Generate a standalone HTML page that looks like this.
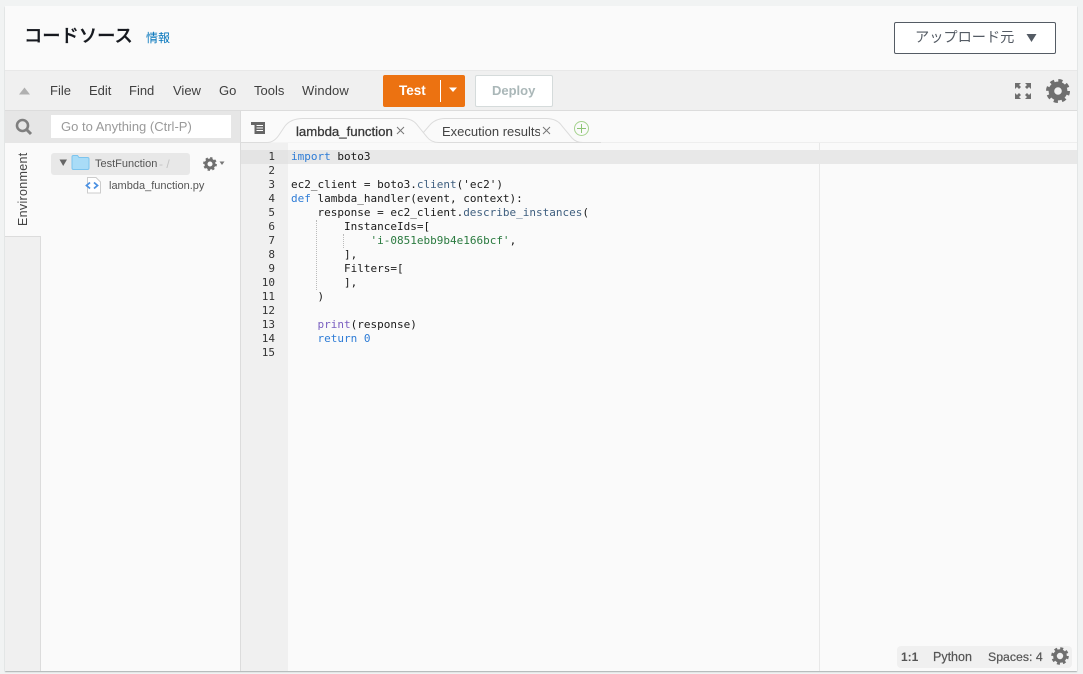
<!DOCTYPE html>
<html><head><meta charset="utf-8"><style>
*{box-sizing:border-box}
html,body{margin:0;padding:0;width:1083px;height:674px;overflow:hidden;background:#f1f3f3}
body{position:relative;font-family:"Liberation Sans","Noto Sans CJK JP",sans-serif}
.a{position:absolute;white-space:nowrap}
.m{font-size:13px;color:#3f3f3f;top:83px;line-height:15px}
.c{position:absolute;left:291px;font:11px/14px "DejaVu Sans Mono","Liberation Mono",monospace;color:#1a1a1a;white-space:pre}
.n{position:absolute;left:241px;width:34px;text-align:right;font:11px/14px "DejaVu Sans Mono","Liberation Mono",monospace;color:#333}
.k{color:#2e7cd6}.f{color:#3f5f7f}.s{color:#2a7a3f}.p{color:#7a5fc0}
</style></head><body>
<div class="a" style="left:5px;top:6px;width:1072px;height:665px;background:#fafafa;box-shadow:0 1px 1px #aab0b0"></div>
<div class="a" style="left:24px;top:23px;font-size:18.300px;line-height:26px;font-weight:500;color:#16191f;-webkit-text-stroke:.3px #16191f">コードソース</div>
<div class="a" style="left:146px;top:30px;font-size:12px;line-height:17px;color:#0073bb">情報</div>
<div class="a" style="left:894px;top:22px;width:162px;height:32px;border:1px solid #545b64;border-radius:2px;background:#fff"></div>
<div class="a" style="left:915px;top:29px;font-size:14.200px;line-height:18px;color:#545b64">アップロード元</div>
<svg class="a" style="left:1026px;top:33px" width="11" height="10"><path d="M.5 1H10.500L5.500 9Z" fill="#545b64"/></svg>

<div class="a" style="left:5px;top:70px;width:1072px;height:41px;background:#f0f0f0;border-top:1px solid #e8e8e8;border-bottom:1px solid #dcdcdc"></div>
<svg class="a" style="left:19px;top:87px" width="12" height="8"><path d="M0 7.500H11L5.500 .5Z" fill="#b0b0b0"/></svg>
<div class="a m" style="left:50px">File</div>
<div class="a m" style="left:89px">Edit</div>
<div class="a m" style="left:129px">Find</div>
<div class="a m" style="left:173px">View</div>
<div class="a m" style="left:219px">Go</div>
<div class="a m" style="left:254px">Tools</div>
<div class="a m" style="left:302px;letter-spacing:.1px">Window</div>
<div class="a" style="left:383px;top:75px;width:82px;height:32px;background:#ec7211;border-radius:2px"></div>
<div class="a" style="left:399px;top:83px;font-size:13.500px;line-height:15px;font-weight:bold;color:#fff">Test</div>
<div class="a" style="left:440px;top:80px;width:1px;height:22px;background:#fff"></div>
<svg class="a" style="left:448px;top:87px" width="10" height="6"><path d="M1 .5H9L5 5Z" fill="#fff"/></svg>
<div class="a" style="left:475px;top:75px;width:78px;height:32px;background:#fff;border:1px solid #d5dbdb;border-radius:2px"></div>
<div class="a" style="left:492px;top:83px;font-size:13px;line-height:15px;font-weight:bold;color:#aab7b8">Deploy</div>
<svg class="a" style="left:1014px;top:82px" width="18" height="18" fill="#6f6f6f"><path d="M1 1H7L5 3 7 5 5 7 3 5 1 7ZM17 1H11L13 3 11 5 13 7 15 5 17 7ZM1 17H7L5 15 7 13 5 11 3 13 1 11ZM17 17H11L13 15 11 13 13 11 15 13 17 11Z"/></svg>
<svg class="a" style="left:1046px;top:79px" width="24" height="24"><circle cx="12" cy="12" r="6.600" fill="none" stroke="#6f6f6f" stroke-width="5.600"/><circle cx="12" cy="12" r="10.300" fill="none" stroke="#6f6f6f" stroke-width="3.400" stroke-dasharray="4.090 4"/></svg>

<div class="a" style="left:5px;top:111px;width:36px;height:560px;background:#f0f0f0"></div>
<div class="a" style="left:5px;top:111px;width:235px;height:32px;background:#e6e6e6"></div>
<div class="a" style="left:5px;top:143px;width:36px;height:94px;background:#fafafa;border-bottom:1px solid #dcdcdc;border-right:0"></div>
<div class="a" style="left:40px;top:237px;width:1px;height:434px;background:#dcdcdc"></div>
<svg class="a" style="left:15px;top:118px" width="18" height="18"><circle cx="7.500" cy="7.500" r="5.500" fill="none" stroke="#7f7f7f" stroke-width="2.600"/><path d="M11.500 11.500L16 16" stroke="#7f7f7f" stroke-width="3"/></svg>
<div class="a" style="left:51px;top:115px;width:180px;height:23px;background:#fff"></div>
<div class="a" style="left:61px;top:119px;font-size:13px;line-height:15px;color:#9a9a9a">Go to Anything (Ctrl-P)</div>
<div class="a" style="left:16px;top:226px;font-size:12.500px;line-height:14px;color:#444;transform-origin:0 0;transform:rotate(-90deg);letter-spacing:.3px">Environment</div>

<div class="a" style="left:51px;top:153px;width:139px;height:22px;background:#e8e8e8;border-radius:3px"></div>
<svg class="a" style="left:59px;top:159px" width="9" height="8"><path d="M.5 .5H8L4.200 7Z" fill="#666"/></svg>
<svg class="a" style="left:71px;top:154px" width="19" height="17"><path d="M1 14V3Q1 1.500 2.500 1.500H6.500L8 3.500H16.500Q18 3.500 18 5V14Q18 15.500 16.500 15.500H2.500Q1 15.500 1 14Z" fill="#a9dcf7" stroke="#7cc4ee"/></svg>
<div class="a" style="left:95px;top:157px;font-size:11px;line-height:14px;color:#555">TestFunction</div>
<div class="a" style="left:159px;top:157px;font-size:12px;line-height:14px;color:#c4c4c4">- /</div>
<svg class="a" style="left:203px;top:157px" width="14" height="14"><circle cx="7" cy="7" r="4" fill="none" stroke="#6f6f6f" stroke-width="3"/><circle cx="7" cy="7" r="5.800" fill="none" stroke="#6f6f6f" stroke-width="2.200" stroke-dasharray="2.300 2.250"/></svg>
<svg class="a" style="left:219px;top:161px" width="6" height="5"><path d="M.5 .5H5.500L3 4Z" fill="#777"/></svg>
<svg class="a" style="left:85px;top:177px" width="17" height="17"><path d="M2.500 .5H11L15.500 5V16H2.500Z" fill="#fff" stroke="#ccc"/><path d="M5 5.500L1.500 8.500 5 11.500M9 5.500L12.500 8.500 9 11.500" fill="none" stroke="#4a90e2" stroke-width="1.800"/></svg>
<div class="a" style="left:109px;top:179px;font-size:11px;line-height:14px;color:#555">lambda_function.py</div>

<div class="a" style="left:240px;top:111px;width:1px;height:560px;background:#dcdcdc"></div>
<div class="a" style="left:241px;top:111px;width:836px;height:32px;background:#fafafa"></div>
<svg class="a" style="left:251px;top:122px" width="15" height="13" fill="#666"><path d="M0 0H14V12H3.500V3H0Z"/><path d="M5.500 3.500H12M5.500 6H12M5.500 8.500H12" stroke="#fff"/></svg>
<div class="a" style="left:241px;top:142px;width:836px;height:1px;background:#eee"></div>
<svg class="a" style="left:241px;top:111px" width="360" height="33">
<path d="M182 22L188 15Q194 7.500 204 7.500H305Q316 7.500 321 15L331 27Q335 31.500 342 31.500H360" fill="#fafafa" stroke="#dcdcdc"/>
<path d="M0 31.500H26Q33 31.500 38 24L44 15Q50 7.500 62 7.500H162Q172 7.500 177 15L186 26Q190 31.500 198 31.500" fill="#fafafa" stroke="#dcdcdc"/>
<rect x="198" y="31" width="145" height="1" fill="#dcdcdc"/>
</svg>
<div class="a" style="left:296px;top:124px;font-size:13.200px;line-height:15px;font-weight:500;color:#3a3a3a;-webkit-text-stroke:.3px #3a3a3a;width:99px;overflow:hidden">lambda_function</div>
<svg class="a" style="left:396px;top:126px" width="9" height="9"><path d="M1 1L8 8M8 1L1 8" stroke="#777"/></svg>
<div class="a" style="left:442px;top:124px;font-size:13px;line-height:15px;color:#444;width:98px;overflow:hidden">Execution results</div>
<svg class="a" style="left:542px;top:126px" width="9" height="9"><path d="M1 1L8 8M8 1L1 8" stroke="#777"/></svg>
<svg class="a" style="left:573px;top:120px" width="17" height="17"><circle cx="8.500" cy="8.500" r="7" fill="none" stroke="#a5d28e"/><path d="M8.500 4V13M4 8.500H13" stroke="#8cc474"/></svg>

<div class="a" style="left:241px;top:143px;width:47px;height:528px;background:#f0f0f0"></div>
<div class="a" style="left:241px;top:150px;width:47px;height:14px;background:#e4e4e4"></div>
<div class="a" style="left:288px;top:150px;width:789px;height:14px;background:#e8e8e8"></div>
<div class="a" style="left:819px;top:143px;width:1px;height:528px;background:#e8e8e8"></div>
<div class="a" style="left:316px;top:220px;height:70px;border-left:1px dotted #bbb"></div>
<div class="a" style="left:343px;top:234px;height:14px;border-left:1px dotted #bbb"></div>

<div class="n" style="top:150px">1
<br>2<br>3<br>4<br>5<br>6<br>7<br>8<br>9<br>10<br>11<br>12<br>13<br>14<br>15</div>
<div class="c" style="top:150px"><span class="k">import</span> boto3

ec2_client = boto3.<span class="f">client</span>('ec2')
<span class="k">def</span> lambda_handler(event, context):
    response = ec2_client.<span class="f">describe_instances</span>(
        InstanceIds=[
            <span class="s">'i-0851ebb9b4e166bcf'</span>,
        ],
        Filters=[
        ],
    )

    <span class="p">print</span>(response)
    <span class="k">return</span> <span class="k">0</span>
</div>

<div class="a" style="left:897px;top:646px;width:175px;height:22px;background:#f0f0f0;border-radius:4px"></div>
<div class="a" style="left:901px;top:650px;font-size:12px;line-height:14px;font-weight:bold;color:#555">1:1</div>
<div class="a" style="left:933px;top:650px;font-size:12.500px;line-height:14px;color:#555;-webkit-text-stroke:.2px #555">Python</div>
<div class="a" style="left:988px;top:650px;font-size:12.300px;line-height:14px;color:#555;-webkit-text-stroke:.2px #555">Spaces: 4</div>
<svg class="a" style="left:1051px;top:647px" width="18" height="18"><circle cx="9" cy="9" r="5" fill="none" stroke="#6f6f6f" stroke-width="3.600"/><circle cx="9" cy="9" r="7.500" fill="none" stroke="#6f6f6f" stroke-width="2.600" stroke-dasharray="2.950 2.940"/></svg>
</body></html>
